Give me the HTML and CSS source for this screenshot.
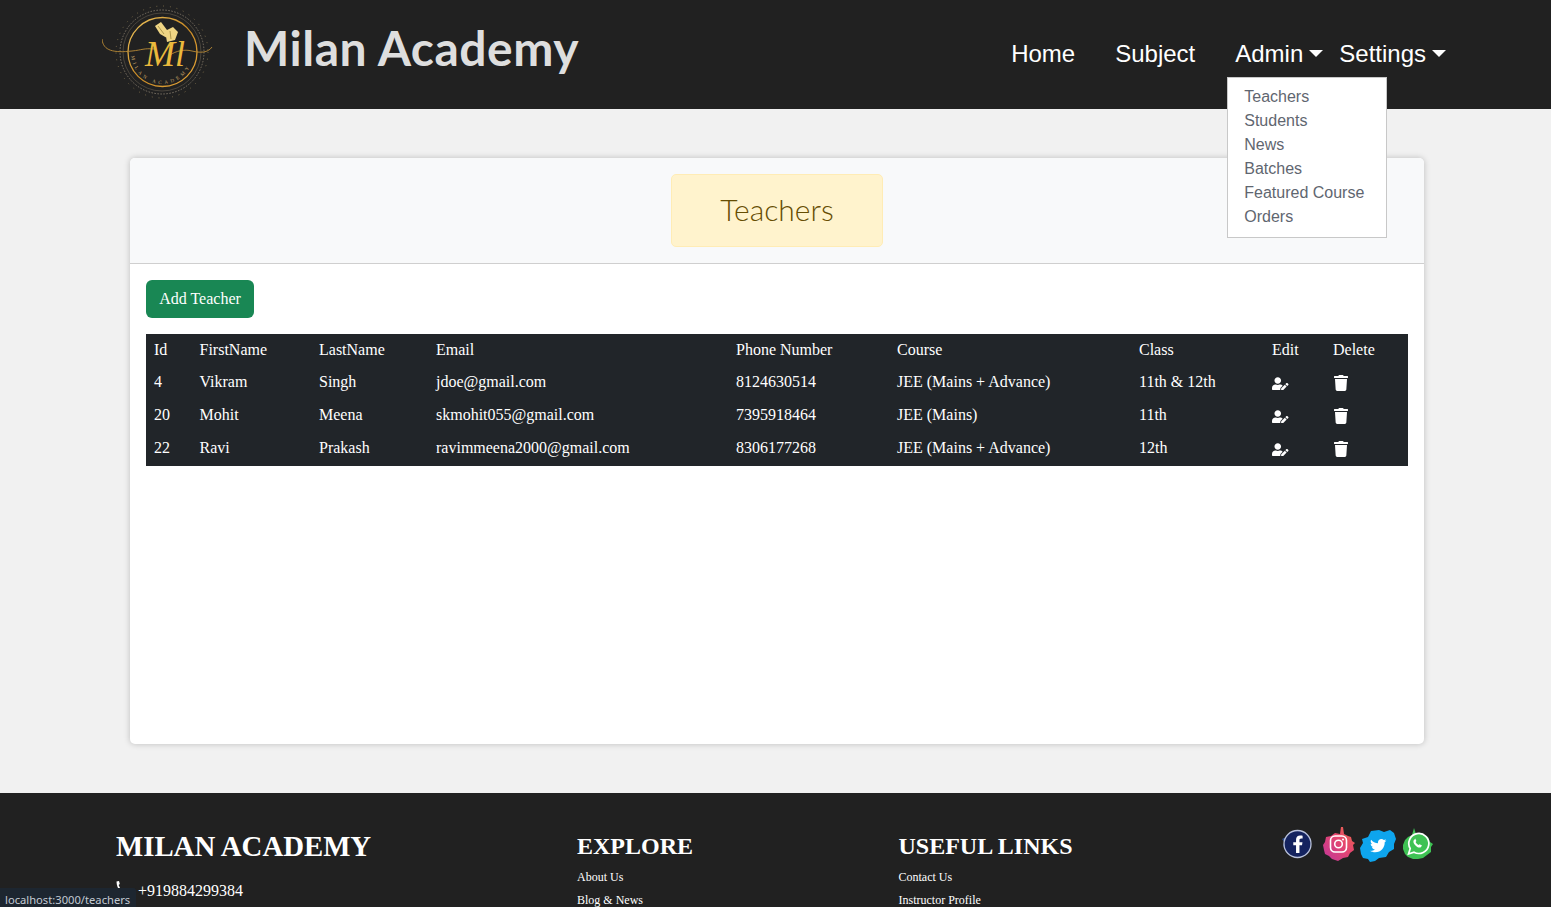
FILE: index.html
```html
<!DOCTYPE html>
<html lang="en">
<head>
<meta charset="utf-8">
<title>Milan Academy</title>
<link rel="stylesheet" href="styles.css">
</head>
<body>
<header class="topbar">
  <a class="brand" href="#">
    <svg class="brand-logo" viewBox="0 0 115 95" aria-hidden="true">
      <defs>
        <linearGradient id="gold" x1="0" y1="0" x2="1" y2="1">
          <stop offset="0" stop-color="#f0c860"/><stop offset=".5" stop-color="#c98a25"/><stop offset="1" stop-color="#e8a83a"/>
        </linearGradient>
        <path id="arc" d="M29 48 A31 31 0 0 0 91 48"/>
      </defs>
      <circle cx="60" cy="47" r="42" fill="none" stroke="#7d7466" stroke-width="1" stroke-dasharray="1.500 1.500"/>
      <circle cx="60" cy="47" r="39" fill="none" stroke="#5a5348" stroke-width=".7"/>
      <circle cx="60" cy="47" r="46" fill="none" stroke="#8a7850" stroke-width="1" stroke-dasharray=".8 6"/>
      <circle cx="60.500" cy="47" r="34.500" fill="none" stroke="url(#gold)" stroke-width="1.300"/>
      <path class="flourish" d="M0 34c1 12 12 14 30 12 10-1 12-3 22-2M68 50c6-4 14-6 22-4 8 2 16 2 20-4"/>
      <text class="logo-mono" x="43" y="61">Ml</text>
      <path d="M53 21l6-4 6 8 0 8-7-4zM63 26l8-4 5 5-3 8-8 2z" fill="#efd584"/>
      <path d="M56 21l6 8M68 26l1 8" stroke="#8f7a33" stroke-width=".7" fill="none"/>
      <text class="logo-arc"><textPath href="#arc" startOffset="3%">MILAN ACADEMY</textPath></text>
    </svg>
    <span class="brand-name">Milan Academy</span>
  </a>
  <nav>
    <ul class="nav-list">
      <li><a class="nav-link" href="#">Home</a></li>
      <li><a class="nav-link" href="#">Subject</a></li>
      <li class="nav-drop">
        <a class="nav-toggle" href="#">Admin</a>
        <ul class="drop-menu">
          <li><a href="#">Teachers</a></li>
          <li><a href="#">Students</a></li>
          <li><a href="#">News</a></li>
          <li><a href="#">Batches</a></li>
          <li><a href="#">Featured Course</a></li>
          <li><a href="#">Orders</a></li>
        </ul>
      </li>
      <li><a class="nav-toggle" href="#">Settings</a></li>
    </ul>
  </nav>
</header>

<main class="page">
  <section class="card">
    <div class="card-head">
      <h1 class="notice">Teachers</h1>
    </div>
    <div class="card-body">
      <a class="btn-add" href="#">Add Teacher</a>
      <table class="teachers">
        <colgroup>
          <col class="c-id"><col class="c-first"><col class="c-last"><col class="c-email"><col class="c-phone"><col class="c-course"><col class="c-class"><col class="c-edit"><col class="c-del">
        </colgroup>
        <thead>
          <tr><th>Id</th><th>FirstName</th><th>LastName</th><th>Email</th><th>Phone Number</th><th>Course</th><th>Class</th><th>Edit</th><th>Delete</th></tr>
        </thead>
        <tbody>
          <tr>
            <td>4</td><td>Vikram</td><td>Singh</td><td>jdoe@gmail.com</td><td>8124630514</td><td>JEE (Mains + Advance)</td><td>11th &amp; 12th</td>
            <td><svg class="ico-edit" viewBox="0 0 640 512"><path d="M224 256c70.700 0 128-57.300 128-128S294.700 0 224 0 96 57.300 96 128s57.300 128 128 128zm89.600 32h-16.700c-22.200 10.200-46.900 16-72.900 16s-50.600-5.800-72.900-16h-16.700C60.200 288 0 348.200 0 422.400V464c0 26.500 21.500 48 48 48h274.900c-2.400-6.800-3.400-14-2.600-21.300l6.800-60.900 1.200-11.100 7.900-7.900 77.300-77.300c-24.500-27.700-60-45.500-99.900-45.500zm45.300 145.300l-6.800 61c-1.100 10.200 7.500 18.800 17.600 17.600l60.900-6.800 137.900-137.900-71.700-71.700-137.900 137.800zM633 268.900L595.100 231c-9.300-9.300-24.500-9.300-33.800 0l-37.800 37.800-4.100 4.100 71.800 71.700 41.800-41.800c9.300-9.400 9.300-24.500 0-33.900z"/></svg></td>
            <td><svg class="ico-trash" viewBox="0 0 448 512"><path d="M432 32H312l-9.400-18.700A24 24 0 0 0 281.100 0H166.800a23.720 23.720 0 0 0-21.400 13.300L136 32H16A16 16 0 0 0 0 48v32a16 16 0 0 0 16 16h416a16 16 0 0 0 16-16V48a16 16 0 0 0-16-16zM53.200 467a48 48 0 0 0 47.900 45h245.800a48 48 0 0 0 47.900-45L416 128H32z"/></svg></td>
          </tr>
          <tr>
            <td>20</td><td>Mohit</td><td>Meena</td><td>skmohit055@gmail.com</td><td>7395918464</td><td>JEE (Mains)</td><td>11th</td>
            <td><svg class="ico-edit" viewBox="0 0 640 512"><path d="M224 256c70.700 0 128-57.300 128-128S294.700 0 224 0 96 57.300 96 128s57.300 128 128 128zm89.600 32h-16.700c-22.200 10.200-46.900 16-72.900 16s-50.600-5.800-72.900-16h-16.700C60.200 288 0 348.200 0 422.400V464c0 26.500 21.500 48 48 48h274.900c-2.400-6.800-3.400-14-2.600-21.300l6.800-60.900 1.200-11.100 7.900-7.900 77.300-77.300c-24.500-27.700-60-45.500-99.900-45.500zm45.300 145.300l-6.800 61c-1.100 10.200 7.500 18.800 17.600 17.600l60.900-6.800 137.900-137.900-71.700-71.700-137.900 137.800zM633 268.900L595.100 231c-9.300-9.300-24.500-9.300-33.800 0l-37.800 37.800-4.100 4.100 71.800 71.700 41.800-41.800c9.300-9.400 9.300-24.500 0-33.900z"/></svg></td>
            <td><svg class="ico-trash" viewBox="0 0 448 512"><path d="M432 32H312l-9.400-18.700A24 24 0 0 0 281.100 0H166.800a23.720 23.720 0 0 0-21.400 13.300L136 32H16A16 16 0 0 0 0 48v32a16 16 0 0 0 16 16h416a16 16 0 0 0 16-16V48a16 16 0 0 0-16-16zM53.200 467a48 48 0 0 0 47.900 45h245.800a48 48 0 0 0 47.900-45L416 128H32z"/></svg></td>
          </tr>
          <tr>
            <td>22</td><td>Ravi</td><td>Prakash</td><td>ravimmeena2000@gmail.com</td><td>8306177268</td><td>JEE (Mains + Advance)</td><td>12th</td>
            <td><svg class="ico-edit" viewBox="0 0 640 512"><path d="M224 256c70.700 0 128-57.300 128-128S294.700 0 224 0 96 57.300 96 128s57.300 128 128 128zm89.600 32h-16.700c-22.200 10.200-46.900 16-72.900 16s-50.600-5.800-72.900-16h-16.700C60.200 288 0 348.200 0 422.400V464c0 26.500 21.500 48 48 48h274.900c-2.400-6.800-3.400-14-2.600-21.300l6.800-60.900 1.200-11.100 7.900-7.900 77.300-77.300c-24.500-27.700-60-45.500-99.900-45.500zm45.300 145.300l-6.800 61c-1.100 10.200 7.500 18.800 17.600 17.600l60.900-6.800 137.900-137.900-71.700-71.700-137.900 137.800zM633 268.900L595.100 231c-9.300-9.300-24.500-9.300-33.800 0l-37.800 37.800-4.100 4.100 71.800 71.700 41.800-41.800c9.300-9.400 9.300-24.500 0-33.900z"/></svg></td>
            <td><svg class="ico-trash" viewBox="0 0 448 512"><path d="M432 32H312l-9.400-18.700A24 24 0 0 0 281.100 0H166.800a23.720 23.720 0 0 0-21.400 13.300L136 32H16A16 16 0 0 0 0 48v32a16 16 0 0 0 16 16h416a16 16 0 0 0 16-16V48a16 16 0 0 0-16-16zM53.200 467a48 48 0 0 0 47.900 45h245.800a48 48 0 0 0 47.900-45L416 128H32z"/></svg></td>
          </tr>
        </tbody>
      </table>
    </div>
  </section>
</main>

<footer class="footer">
  <div class="foot-col">
    <h2 class="foot-brand">MILAN ACADEMY</h2>
    <p class="phone">
      <svg class="ico-phone" viewBox="0 0 6 12"><path d="M0.500 0.500L3 0 3.800 3 2.600 4 5.500 10 4.500 11C2 8 0.500 4 0.500 0.500z"/></svg>
      <span>+919884299384</span>
    </p>
  </div>
  <div class="foot-col">
    <h2>EXPLORE</h2>
    <ul class="foot-links"><li><a href="#">About Us</a></li><li><a href="#">Blog &amp; News</a></li></ul>
  </div>
  <div class="foot-col">
    <h2>USEFUL LINKS</h2>
    <ul class="foot-links"><li><a href="#">Contact Us</a></li><li><a href="#">Instructor Profile</a></li></ul>
  </div>
  <div class="socials">
    <svg viewBox="0 0 40 40" aria-label="Facebook">
      <path d="M4 15l4-2 3 13-4-1-2-4 2-2z" fill="#2b4a8c"/>
      <circle cx="19.500" cy="20" r="13.500" fill="#14235f" stroke="#b9c2dc" stroke-width="1.300"/>
      <g transform="translate(14.500 11.500) scale(.034)"><path fill="#fff" d="M279.140 288l14.220-92.660h-88.910v-60.130c0-25.350 12.420-50.060 52.240-50.060h40.420V6.260S260.430 0 225.360 0c-73.220 0-121.080 44.380-121.080 124.720v70.620H22.890V288h81.390v224h100.170V288z"/></g>
    </svg>
    <svg viewBox="0 0 40 40" aria-label="Instagram">
      <defs><linearGradient id="ig" x1="0" y1="1" x2="1" y2="0"><stop offset="0" stop-color="#c1369a"/><stop offset=".6" stop-color="#e6476d"/><stop offset="1" stop-color="#ee7043"/></linearGradient></defs>
      <path d="M5 21l2-3 1-5 5-1 4-3 5 1 1-7 2 0 1 7 4 2 3 1 1 4 3 2-2 2 1 5-4 3-2 4-5 1-5 3-6-2-3-3-4-2-1-4z" fill="url(#ig)"/>
      <rect x="12.500" y="12" width="16" height="16" rx="4.500" fill="none" stroke="#fff" stroke-width="1.600"/>
      <circle cx="20.500" cy="20" r="3.800" fill="none" stroke="#fff" stroke-width="1.600"/>
      <circle cx="25" cy="15.500" r="1" fill="#fff"/>
    </svg>
    <svg viewBox="0 0 40 40" aria-label="Twitter">
      <path d="M2 24l3-5-1-4 6-2 3-6 8-1 5 2 6-2 4 3 2 6-2 5 0 5-5 3-3 5-7 1-4 3-5 1-2-3-5-1-2-4z" fill="#0ea5ee"/>
      <g transform="translate(12 13.500) scale(.032)"><path fill="#fff" d="M459.370 151.716c.325 4.548.325 9.097.325 13.645 0 138.720-105.583 298.558-298.558 298.558-59.452 0-114.680-17.219-161.137-47.106 8.447.974 16.568 1.299 25.340 1.299 49.055 0 94.213-16.568 130.274-44.832-46.132-.975-84.792-31.188-98.112-72.772 6.498.974 12.995 1.624 19.818 1.624 9.421 0 18.843-1.300 27.614-3.573-48.081-9.747-84.143-51.980-84.143-102.985v-1.299c13.969 7.797 30.214 12.670 47.431 13.319-28.264-18.843-46.781-51.005-46.781-87.391 0-19.492 5.197-37.360 14.294-52.954 51.655 63.675 129.300 105.258 216.365 109.807-1.624-7.797-2.599-15.918-2.599-24.040 0-57.828 46.782-104.934 104.934-104.934 30.213 0 57.502 12.670 76.670 33.137 23.715-4.548 46.456-13.320 66.599-25.340-7.798 24.366-24.366 44.833-46.132 57.827 21.117-2.273 41.584-8.122 60.426-16.243-14.292 20.791-32.161 39.308-52.628 54.253z"/></g>
    </svg>
    <svg viewBox="0 0 40 40" aria-label="WhatsApp">
      <path d="M5 21l2-5 3-3 4-2 2-7 2 6 5-1 3 2 4 2 2 5 3 2-2 3 0 5-4 3-4 3-5 1-5 0-5-2-3-3-2-5z" fill="#3fc254"/>
      <path d="M10.500 30l1.700-5.500a10 10 0 1 1 3.800 3.700z" fill="none" stroke="#fff" stroke-width="1.700"/>
      <path d="M16.500 15.500c-1.800 1.200-1.300 3.500.5 5.500s4 3.200 5.800 2.300l1.200-1.700-2.400-1.400-1 .8c-1.200-.4-2.500-1.800-3-3l.8-1-1.200-2.500z" fill="#fff"/>
    </svg>
  </div>
</footer>

<div class="status-bubble">localhost:3000/teachers</div>
</body>
</html>
```
FILE: styles.css
```css
* { box-sizing: border-box; }
html, body { margin: 0; padding: 0; }
body {
  height: 907px;
  overflow: hidden;
  background: #f1f1f1;
  font-family: "Liberation Serif", serif;
  font-size: 16px;
  color: #fff;
}
a { color: inherit; text-decoration: none; }
ul { list-style: none; margin: 0; padding: 0; }

/* top bar */
.topbar {
  height: 109px;
  background: #212121;
  display: flex;
  align-items: center;
  justify-content: space-between;
  padding: 0 97px 0 102px;
}
.brand { display: flex; align-items: center; gap: 27px; }
.brand-logo { width: 115px; height: 95px; display: block; margin-bottom: 4px; }
.flourish { fill: none; stroke: #b98a35; stroke-width: .9; }
.logo-mono { font: italic 36px "Liberation Serif", serif; fill: #eab93c; }
.logo-arc { font: 5px "Liberation Serif", serif; fill: #c9a66a; letter-spacing: 3px; }
.brand-name {
  font: 700 48px "Lato", sans-serif;
  letter-spacing: .5px;
  color: #dedede;
  margin-bottom: 15px;
}
.nav-list {
  display: flex;
  align-items: center;
  font: 24px/36px "Liberation Sans", sans-serif;
  padding-bottom: 1px;
}
.nav-link { display: block; padding: 0 20px; }
.nav-toggle { display: block; padding: 0 8px; }
.nav-toggle::after {
  content: "";
  display: inline-block;
  margin-left: 6px;
  vertical-align: 5px;
  border-top: 7.2px solid #fff;
  border-left: 7.2px solid transparent;
  border-right: 7.2px solid transparent;
}
.nav-drop { position: relative; margin-left: 12px; }
.drop-menu {
  position: absolute;
  top: 41px;
  left: 0;
  width: 160px;
  height: 161px;
  padding: 7px 0 0 16px;
  background: #fff;
  border: 1px solid #c8c8c8;
  font-size: 16px;
  line-height: 24px;
  color: #5f6670;
  z-index: 5;
}

/* card */
.page { height: 684px; padding: 49px 127px 0 130px; }
.card {
  height: 586px;
  background: #fff;
  border-radius: 5px;
  box-shadow: 0 0 6px rgba(0, 0, 0, .22);
  overflow: hidden;
}
.card-head {
  height: 106px;
  padding: 16px 0;
  background: #f8f9fa;
  border-bottom: 1px solid #cfcfcf;
  display: flex;
  justify-content: center;
}
.notice {
  margin: 0;
  width: 212px;
  height: 73px;
  background: #fff3cd;
  border: 1px solid #ffecb5;
  border-radius: 5px;
  color: #664d03;
  font: 300 30px/69px "Lato", sans-serif;
  text-align: center;
}
.card-body { padding: 16px; }
.btn-add {
  display: block;
  width: 108px;
  height: 38px;
  margin-bottom: 16px;
  background: #198754;
  border-radius: 6px;
  text-align: center;
  line-height: 38px;
}
.teachers {
  width: 1262px;
  table-layout: fixed;
  border-collapse: collapse;
  background: #212529;
}
.teachers th, .teachers td {
  height: 33px;
  padding: 4px 8px 5px;
  font-weight: 400;
  text-align: left;
  line-height: 24px;
  white-space: nowrap;
}
.teachers td { padding: 3px 8px 6px; }
.c-id { width: 45.5px; }
.c-first { width: 119.5px; }
.c-last { width: 117px; }
.c-email { width: 300px; }
.c-phone { width: 161px; }
.c-course { width: 242px; }
.c-class { width: 133px; }
.c-edit { width: 61px; }
.c-del { width: 83px; }
.ico-edit { width: 16.5px; height: 13.5px; fill: #fff; display: block; margin-top: 3px; }
.ico-trash { width: 14px; height: 16px; fill: #fff; display: block; margin: 2px 0 0 1px; }

/* footer */
.footer {
  height: 114px;
  background: #212121;
  overflow: hidden;
  display: grid;
  grid-template-columns: 461px 321.500px 380.500px 1fr;
  padding: 36px 0 0 116px;
}
.footer h2 { margin: 0; font-size: 24px; line-height: 34px; font-weight: 700; }
.footer .foot-brand { font-size: 28.800px; }
.phone { display: flex; margin: 16px 0 0; line-height: 24px; }
.phone span { margin-left: 16px; }
.ico-phone { width: 6px; height: 12px; fill: #fff; margin-top: 2px; }
.foot-links { margin-top: 3px; font-size: 12px; line-height: 23px; }
.socials { display: flex; margin: -5px 0 0 -1px; align-items: flex-start; }
.socials svg { width: 40px; height: 40px; flex: none; }

/* browser status bubble */
.status-bubble {
  position: fixed;
  left: 0;
  bottom: 0;
  height: 19px;
  padding: 0 6px 0 5px;
  background: #1d2630;
  color: #c3cad3;
  font: 11.200px/23px "Noto Sans", sans-serif;
  border-top-right-radius: 3px;
}
```
